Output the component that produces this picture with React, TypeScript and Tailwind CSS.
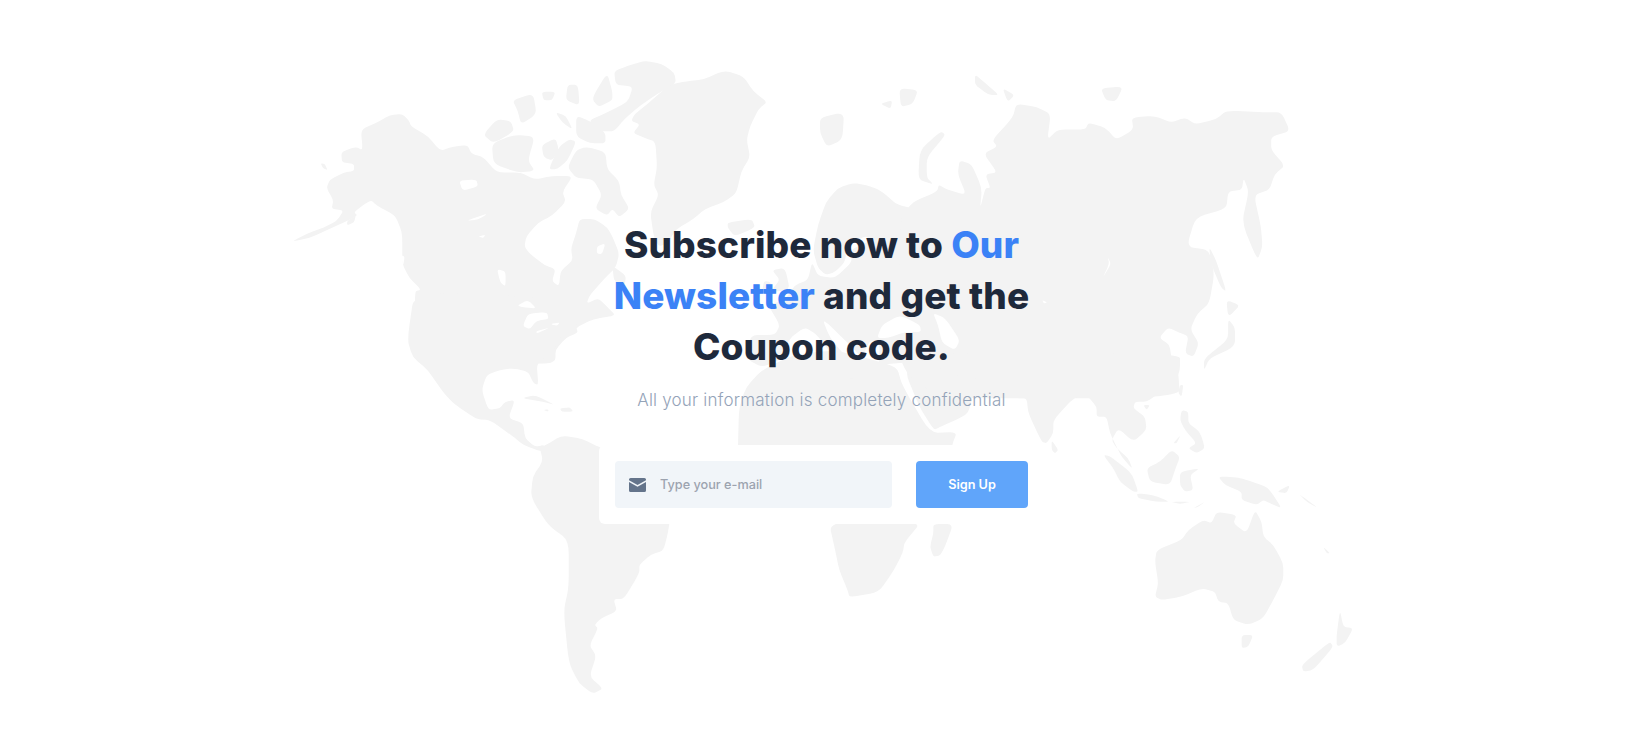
// map outlines are traced per crop of the reference, so each group has its own scale
const northAmerica = [
  '35,585 60,572 85,560 125,545 165,525 185,495 150,490 155,465 135,430 145,405 185,385 215,380 215,360 180,355 178,325 220,310 240,320 235,260 280,240 320,218 355,215 375,235 380,250 430,280 465,322 500,310 545,305 555,330 590,340 630,385 700,385 740,405 790,395 850,395 820,440 830,470 790,510 750,530 715,570 710,600 725,620 770,655 800,665 790,700 810,715 815,670 850,640 845,605 860,560 870,520 915,520 950,545 965,570 985,620 975,660 945,690 900,740 890,765 925,750 950,775 975,800 910,810 860,835 865,850 830,865 800,900 800,930 780,940 400,940 390,730 410,725 375,690 355,650 355,560 335,510 280,480 265,465 240,480 215,500 225,510 185,530 130,555 85,575',
  '835,370 860,320 890,310 945,325 950,375 985,410 990,450 1015,490 985,515 965,490 950,510 915,490 935,450 910,405 860,400',
  '590,275 630,230 670,235 680,265 620,300',
  '615,300 680,275 740,280 720,350 740,380 690,385 620,360',
  '760,305 800,285 810,320 790,350 765,340',
  '810,310 840,288 860,295 835,350 805,375 780,375',
  '675,175 735,155 745,215 700,245 690,205',
  '760,150 800,150 790,175 765,175',
  '835,130 865,130 870,190 830,175',
  '905,170 950,95 965,150 965,175 925,195',
  '800,210 830,220 850,260 820,240',
  '860,220 900,235 945,270 945,300 900,300 860,280',
  '970,90 1010,75 1060,60 1110,70 1145,95 1150,125 1090,160 1040,195 1000,230 970,265 930,265 895,235 950,210 1010,180 1025,135 975,130',
  '1030,215 1080,175 1130,130 1180,120 1230,115 1290,88 1345,105 1375,150 1415,180 1390,200 1365,250 1355,290 1365,340 1340,380 1325,445 1290,470 1235,490 1200,520 1150,550 1125,590 1100,600 1085,570 1075,500 1100,450 1085,420 1095,370 1090,295 1060,285 1025,270 1045,245 1020,235',
  '1300,530 1370,520 1380,545 1320,570 1300,545',
  '965,655 1005,685 1000,715 970,700',
  '118,358 130,360 138,378 125,372',
  '195,525 220,510 215,530 195,538',
]

const northAmericaCuts = [
  '705,830 720,795 775,790 780,810 745,815 725,840',
  '745,845 785,835 745,852',
  '785,825 812,820 805,830',
  '690,770 720,755 745,780 700,775',
  '520,408 570,405 575,425 530,438',
  '540,525 605,503 575,522',
  '630,665 655,672 655,715 640,705',
  '920,600 945,590 935,622 920,620',
  '575,570 597,566 590,575',
  '350,625 362,628 358,655',
]

const gulfAndCentralAmerica = [
  '-197,-117 318,-90 288,-9 255,0 235,30 215,70 170,100 175,165 160,160 145,125 100,115 60,120 20,135 5,180 25,240 60,235 75,215 105,210 85,265 130,280 135,325 165,350 195,345 185,365 130,345 100,320 30,270 -10,268 -80,220 -110,187 -157,120 -202,81 -218,30',
  '125,205 165,195 225,225 190,215',
  '240,235 270,232 280,245 245,245',
  '190,240 205,238 205,245',
]

const southAmerica = [
  '420,220 470,190 530,200 580,225 800,300 780,465 765,525 730,535 695,565 695,590 650,665 620,665 630,700 585,720 565,740 575,750 550,800 570,830 550,890 590,925 560,940 520,910 490,850 475,700 490,630 490,495 430,450 380,370 385,310 415,265 405,220',
]

const southernAfrica = ['1245,440 1265,530 1275,580 1300,640 1305,660 1390,645 1435,580 1460,530 1465,500 1515,440']

const europeAndMiddleEast = [
  '900,207 880,190 866,185 853,183 838,188 826,202 818,225 813,250 818,268 826,275 835,272 845,262 848,240 857,217 848,232 843,240 850,245 865,236 872,240 850,250 852,262 835,278 818,276 812,262 808,280 795,285 785,300 768,305 780,325 775,335 750,335 748,360 762,367 780,360 790,338 805,327 817,335 840,365 847,358 830,338 822,318 850,345 862,358 870,340 880,345 878,365 910,362 1000,380 1000,220',
  '905,372 918,360 945,375 956,390 972,386 972,400 968,413 960,418 940,427 934,430 920,408',
  '738,445 739,408 746,387 762,370 793,355 833,350 863,357 897,367 902,385 930,433 957,432 952,445 952,460 738,460',
  '772,270 785,268 790,290 770,292 780,280',
  '764,281 771,282 770,295 762,293',
  '840,375 855,372 858,378 842,379',
]

const europeCuts = [
  '877,338 882,325 900,315 920,325 921,332 905,332 888,338',
  '933,313 945,318 960,340 955,350 942,343 938,325',
]

const northAsia = [
  '230,520 270,470 340,440 345,420 370,435 425,450 400,390 405,350 440,360 470,430 465,490 480,430 495,430 480,390 515,385 475,330 515,310 500,290 560,225 570,185 630,195 670,215 660,290 690,260 770,260 780,240 830,255 860,290 910,260 905,225 970,220 1020,240 1060,225 1090,245 1150,230 1180,205 1290,210 1340,210 1365,265 1310,280 1310,320 1350,365 1320,390 1305,435 1260,450 1280,540 1285,600 1270,640 1225,530 1245,440 1230,400 1225,435 1185,440 1180,490 1090,515 1065,600 1130,610 1145,680 1130,765 1095,795 1075,840 1100,880 1085,920 1060,910 1070,860 1045,850 1010,835 985,865 1015,885 1020,920 1040,960 1045,1040 230,1040',
  '290,320 350,265 365,275 310,340 310,400 330,420 285,405',
  '450,100 480,125 520,160 490,160 450,130',
  '530,140 565,160 545,180',
  '815,140 880,135 860,178 830,175',
  '230,140 285,145 270,185 235,195',
  '175,185 210,175 205,200',
  '0,225 70,210 65,290 20,310 0,270',
  '1130,600 1150,640 1180,730 1165,720 1135,650',
  '1180,755 1220,770 1185,805',
  '1185,810 1205,835 1205,890 1130,925 1115,960 1115,925 1185,870',
]

const northAsiaCuts = ['835,630 845,650 820,692 840,650', '645,755 660,762 650,765']

const southAsiaAndOceania = [
  '-100,-50 720,-50 720,0 705,40 650,75 620,95 585,95 580,115 615,140 620,180 580,215 535,175 515,210 530,235 565,265 578,298 545,260 530,230 510,190 500,140 470,140 470,110 440,75 400,85 340,150 340,190 320,220 305,215 265,130 260,85 230,85 190,45 135,30 95,22 70,25 15,0',
  '490,255 510,258 575,310 595,365 580,365 540,335 520,295',
  '590,370 640,375 690,395 650,395 595,385',
  '620,295 660,275 695,240 720,260 705,300 690,345 630,335',
  '720,305 780,295 750,315 760,360 735,365 720,345',
  '725,120 745,125 745,160 780,185 795,235 770,250 745,235 770,220 735,180 720,150',
  '700,220 722,195 710,220',
  '835,320 870,320 905,325 980,350 1000,375 1025,415 990,400 970,390 950,405 905,390 905,365 855,345',
  '690,395 755,395 720,402',
  '760,415 795,395 775,410',
  '720,45 730,45 725,80 715,70',
  '335,210 355,240 345,250 335,240',
  '610,105 630,105 620,120',
  '650,540 725,510 745,480 790,450 815,460 830,425 890,435 880,460 920,490 945,420 965,455 970,500 1000,525 1030,580 1030,630 1005,680 970,745 925,765 880,750 865,700 835,695 825,665 785,655 725,680 665,690 645,680 655,640 645,575',
  '905,795 940,795 925,830 905,835',
  '1200,720 1210,770 1240,775 1215,820 1190,830 1190,795',
  '1170,815 1180,830 1120,900 1090,905 1085,885',
  '1150,530 1170,550 1160,550',
  '1010,365 1050,345 1040,370',
  '1075,370 1135,415 1100,395',
  '-20,462 40,462 15,530 0,557 -20,560 -30,530 -20,490',
]

const layers = [
  { transform: 'translate(280 40) scale(0.3444)', land: northAmerica, cuts: northAmericaCuts },
  { transform: 'translate(480 330) scale(0.3333)', land: gulfAndCentralAmerica, cuts: [] },
  { transform: 'translate(400 370) scale(0.3444)', land: [...southAmerica, ...southernAfrica], cuts: [] },
  { transform: '', land: europeAndMiddleEast, cuts: [] },
  { transform: 'translate(820 40) scale(0.3444)', land: northAsia, cuts: northAsiaCuts },
  { transform: 'translate(940 370) scale(0.3333)', land: southAsiaAndOceania, cuts: [] },
  { transform: '', land: [], cuts: europeCuts },
]

// rounds every corner of a traced outline so coasts don't look like cut paper
function coastPath(points: string) {
  const pts = points.split(' ').map((p) => p.split(',').map(Number))
  const lerp = (a: number[], b: number[], t: number) => [a[0] + (b[0] - a[0]) * t, a[1] + (b[1] - a[1]) * t]
  return (
    pts
      .map((v, i) => {
        const from = lerp(v, pts[(i - 1 + pts.length) % pts.length], 0.3)
        const to = lerp(v, pts[(i + 1) % pts.length], 0.3)
        return `${i === 0 ? 'M' : 'L'}${from[0]} ${from[1]}Q${v[0]} ${v[1]} ${to[0]} ${to[1]}`
      })
      .join('') + 'Z'
  )
}

function WorldMap() {
  return (
    <svg className="absolute inset-0 h-full w-full" viewBox="0 0 1640 735" aria-hidden="true">
      {layers.map((layer, i) => (
        <g key={i} transform={layer.transform}>
          {layer.land.map((points) => (
            <path key={points} d={coastPath(points)} fill="#f3f3f3" />
          ))}
        </g>
      ))}
      {layers.map((layer, i) => (
        <g key={i} transform={layer.transform}>
          {layer.cuts.map((points) => (
            <path key={points} d={coastPath(points)} fill="#ffffff" />
          ))}
        </g>
      ))}
    </svg>
  )
}

function MailIcon() {
  return (
    <svg className="h-[14px] w-[17px] shrink-0" viewBox="0 0 17 14" aria-hidden="true">
      <path d="M1.6 0h13.8A1.6 1.6 0 0 1 17 1.6v.7L8.5 6.9 0 2.3v-.7A1.6 1.6 0 0 1 1.6 0z" fill="#64748b" />
      <path d="M0 4.1l8.5 4.6L17 4.1v8.3a1.6 1.6 0 0 1-1.6 1.6H1.6A1.6 1.6 0 0 1 0 12.4z" fill="#64748b" />
    </svg>
  )
}

export default function App() {
  return (
    <div className="relative h-[735px] overflow-hidden bg-white font-['Inter',sans-serif]">
      <WorldMap />

      <div className="relative flex flex-col items-center pt-[219px] pl-[3px]">
        <h1 className="w-[440px] text-center text-[37px] font-extrabold leading-[51px] tracking-[0.1px] text-[#1e293b]">
          Subscribe now to <span className="text-[#3b82f6]">Our</span> <span className="text-[#3b82f6]">Newsletter</span>{' '}
          and get the Coupon code.
        </h1>
        <p className="mt-[16px] text-[17px] font-light leading-6 tracking-[0.2px] text-[#94a3b8]">
          All your information is completely confidential
        </p>

        <form className="mt-[33px] flex w-[445px] gap-6 rounded-md bg-white p-4">
          <div className="flex h-[47px] w-[277px] items-center gap-[14px] rounded bg-[#f1f5f9] pl-[14px]">
            <MailIcon />
            <input
              type="email"
              placeholder="Type your e-mail"
              className="mt-px w-full bg-transparent text-[12.7px] font-medium text-gray-700 outline-none placeholder:text-[#9ca3af]"
            />
          </div>
          <button type="button" className="h-[47px] w-[112px] rounded bg-[#60a5fa] pt-px text-[12.7px] font-semibold text-white">
            Sign Up
          </button>
        </form>
      </div>
    </div>
  )
}
